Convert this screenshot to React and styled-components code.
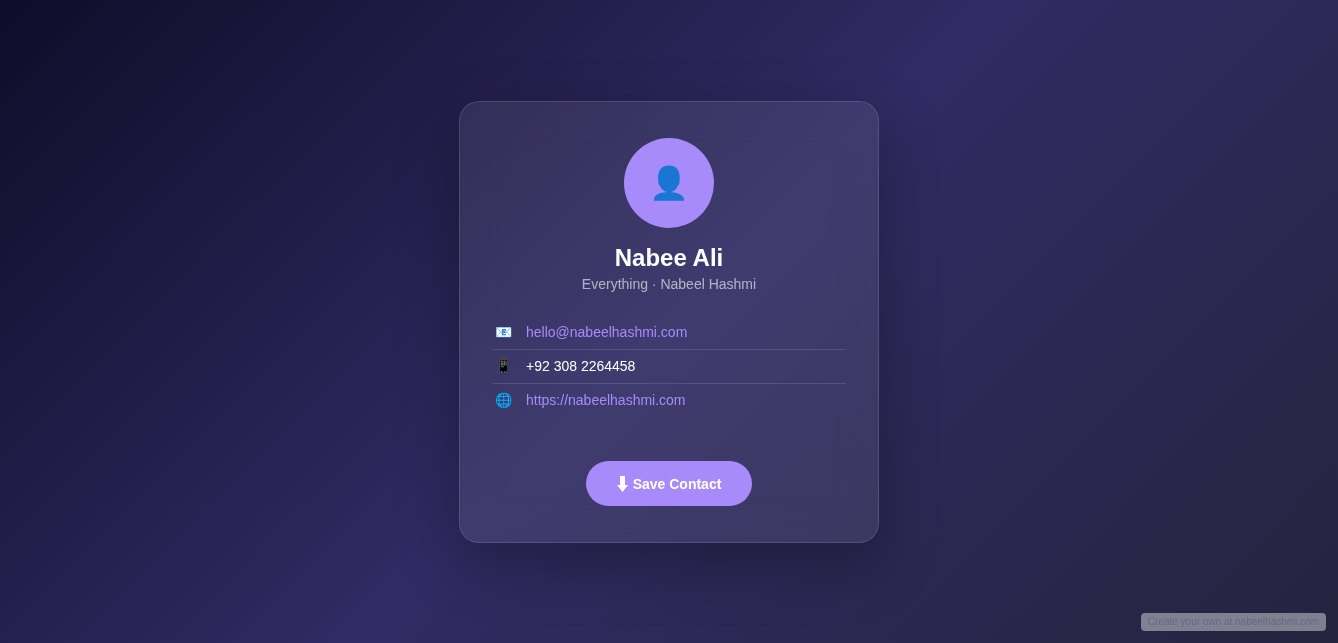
import React from "react";
import styled, { createGlobalStyle } from "styled-components";

const GlobalStyle = createGlobalStyle`
  *, *::before, *::after { box-sizing: border-box; }
  body {
    margin: 0;
    font-family: "Liberation Sans", Arial, sans-serif;
    color: #fff;
  }
`;

const Page = styled.main`
  min-height: 100vh;
  display: flex;
  align-items: center;
  justify-content: center;
  padding: 24px;
  background: linear-gradient(135deg, #0f0c29, #302b63, #24243e);
`;

const Card = styled.section`
  width: 100%;
  max-width: 420px;
  padding: 36px 32px;
  text-align: center;
  background: rgba(255, 255, 255, 0.08);
  border: 1px solid rgba(255, 255, 255, 0.12);
  border-radius: 20px;
  box-shadow: 0 20px 60px rgba(0, 0, 0, 0.3);
  backdrop-filter: blur(20px);
`;

const Avatar = styled.div`
  width: 90px;
  height: 90px;
  margin: 0 auto 16px;
  display: flex;
  align-items: center;
  justify-content: center;
  border-radius: 50%;
  background: #a78bfa;
  font-size: 32px;
`;

const Name = styled.h1`
  margin: 0 0 4px;
  font-size: 24px;
  line-height: 27px;
  font-weight: 700;
`;

const Role = styled.p`
  margin: 0 0 23px;
  font-size: 14px;
  line-height: 18px;
  opacity: 0.6;
`;

const List = styled.ul`
  list-style: none;
  margin: 0 0 44px;
  padding: 0;
`;

const Row = styled.li`
  display: flex;
  align-items: center;
  gap: 12px;
  padding: 8px 0;
  font-size: 14px;
  line-height: 17px;
  text-align: left;
  border-bottom: 1px solid rgba(255, 255, 255, 0.12);
  &:last-child { border-bottom: 0; }
`;

const Icon = styled.span`
  width: 22px;
  text-align: center;
`;

const Link = styled.a`
  color: #a78bfa;
  text-decoration: none;
`;

const SaveButton = styled.button`
  display: inline-flex;
  align-items: center;
  gap: 5px;
  padding: 15px 31px 13px;
  border: 0;
  border-radius: 50px;
  background: #a78bfa;
  color: #fff;
  font: 700 14px/17px "Liberation Sans", Arial, sans-serif;
  cursor: pointer;
`;

const Credit = styled.a`
  position: fixed;
  right: 12px;
  bottom: 12px;
  padding: 3px 7px;
  border-radius: 4px;
  background: rgba(255, 255, 255, 0.42);
  color: #6a6880;
  font-size: 10px;
  line-height: 12px;
  text-decoration: none;
`;

const DownArrow = () => (
  <svg width="11" height="16" viewBox="0 0 11 16" fill="currentColor" aria-hidden="true">
    <path d="M3 0H8V9H11L5.5 16L0 9H3Z" />
  </svg>
);

export default function App() {
  return (
    <>
      <GlobalStyle />
      <Page>
        <Card>
          <Avatar>👤</Avatar>
          <Name>Nabee Ali</Name>
          <Role>Everything · Nabeel Hashmi</Role>
          <List>
            <Row><Icon>📧</Icon><Link href="mailto:hello@nabeelhashmi.com">hello@nabeelhashmi.com</Link></Row>
            <Row><Icon>📱</Icon><span>+92 308 2264458</span></Row>
            <Row><Icon>🌐</Icon><Link href="#website">https://nabeelhashmi.com</Link></Row>
          </List>
          <SaveButton type="button"><DownArrow />Save Contact</SaveButton>
        </Card>
        <Credit href="#create">Create your own at nabeelhashmi.com</Credit>
      </Page>
    </>
  );
}
